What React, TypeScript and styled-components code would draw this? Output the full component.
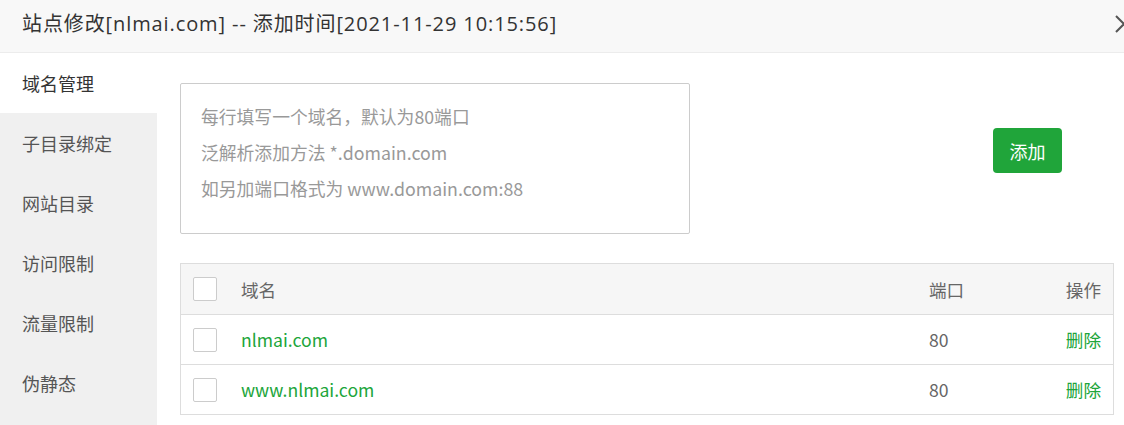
import React from "react";
import styled, { createGlobalStyle } from "styled-components";

const Global = createGlobalStyle`
  html, body { margin: 0; padding: 0; background: #fff; }
  body { font-family: "Noto Sans CJK SC", "Noto Sans", sans-serif; overflow: hidden; }
  * { box-sizing: border-box; }
`;

const Dialog = styled.div`
  position: relative;
  width: 1124px;
  height: 425px;
  background: #fff;
  color: #333;
`;

const Header = styled.div`
  height: 53px;
  padding-left: 22px;
  background: #f8f8f8;
  border-bottom: 1px solid #ececec;
  font-family: "Open Sans", "Noto Sans CJK SC", sans-serif;
  font-size: 20px;
  letter-spacing: 0.9px;
  line-height: 48px;
  color: #333;
  white-space: nowrap;
`;

const Close = styled.button`
  position: absolute;
  left: 1115px;
  top: 15px;
  width: 18px;
  height: 18px;
  padding: 0;
  border: 0;
  background: transparent;
  display: block;
`;

const Body = styled.div`
  display: flex;
  height: 372px;
`;

const Side = styled.nav`
  width: 157px;
  flex: none;
  background: #f0f0f0;
  display: flex;
  flex-direction: column;
`;

const SideItem = styled.div<{ $active?: boolean }>`
  height: 60px;
  line-height: 61px;
  padding-left: 22px;
  font-size: 18px;
  color: ${(p) => (p.$active ? "#333" : "#555")};
  background: ${(p) => (p.$active ? "#fff" : "transparent")};
`;

const Content = styled.div`
  flex: 1;
  padding: 30px 10px 0 23px;
  display: flex;
  flex-direction: column;
`;

const TopRow = styled.div`
  display: flex;
  align-items: flex-start;
`;

const Area = styled.textarea`
  width: 510px;
  height: 151px;
  border: 1px solid #ccc;
  border-radius: 2px;
  padding: 14px 20px;
  font-family: inherit;
  font-size: 17.8px;
  line-height: 36px;
  color: #333;
  resize: none;
  outline: none;
  &::placeholder { color: #999; }
`;

const AddButton = styled.button`
  margin: 45px 0 0 303px;
  width: 69px;
  height: 45px;
  border: 0;
  border-radius: 4px;
  background: #20a53a;
  color: #fff;
  font-family: inherit;
  font-size: 18px;
  padding: 0;
`;

const Table = styled.div`
  margin-top: 29px;
  width: 934px;
  border: 1px solid #ddd;
`;

const Row = styled.div<{ $head?: boolean }>`
  display: grid;
  grid-template-columns: 60px 688px 110px 1fr;
  align-items: center;
  height: 50px;
  background: ${(p) => (p.$head ? "#f6f6f6" : "#fff")};
  border-top: ${(p) => (p.$head ? "0" : "1px solid #ddd")};
  font-size: 17.6px;
`;

const Cell = styled.div<{ $color?: string; $right?: boolean }>`
  color: ${(p) => p.$color || "#666"};
  text-align: ${(p) => (p.$right ? "right" : "left")};
  padding-right: ${(p) => (p.$right ? "12px" : "0")};
  white-space: nowrap;
`;

const CheckCell = styled.div`
  padding-left: 12px;
  display: flex;
  align-items: center;
`;

const Check = styled.span`
  display: block;
  width: 24px;
  height: 24px;
  border: 1px solid #ccc;
  border-radius: 2px;
  background: #fff;
`;

const items = ["域名管理", "子目录绑定", "网站目录", "访问限制", "流量限制", "伪静态"];
const domains = [
  { name: "nlmai.com", port: 80 },
  { name: "www.nlmai.com", port: 80 },
];

export default function App() {
  return (
    <>
      <Global />
      <Dialog>
        <Header>站点修改[nlmai.com] -- 添加时间[2021-11-29 10:15:56]</Header>
        <Close aria-label="关闭">
          <svg width="18" height="18" viewBox="0 0 18 18">
            <path d="M1 1 L17 17 M17 1 L1 17" stroke="#555" strokeWidth="2" fill="none" />
          </svg>
        </Close>
        <Body>
          <Side>
            {items.map((t, i) => (
              <SideItem key={t} $active={i === 0}>
                {t}
              </SideItem>
            ))}
          </Side>
          <Content>
            <TopRow>
              <Area
                placeholder={"每行填写一个域名，默认为80端口\n泛解析添加方法 *.domain.com\n如另加端口格式为 www.domain.com:88"}
              />
              <AddButton>添加</AddButton>
            </TopRow>
            <Table>
              <Row $head>
                <CheckCell>
                  <Check />
                </CheckCell>
                <Cell>域名</Cell>
                <Cell>端口</Cell>
                <Cell $right>操作</Cell>
              </Row>
              {domains.map((d) => (
                <Row key={d.name}>
                  <CheckCell>
                    <Check />
                  </CheckCell>
                  <Cell $color="#20a53a">{d.name}</Cell>
                  <Cell>{d.port}</Cell>
                  <Cell $right $color="#20a53a">删除</Cell>
                </Row>
              ))}
            </Table>
          </Content>
        </Body>
      </Dialog>
    </>
  );
}
